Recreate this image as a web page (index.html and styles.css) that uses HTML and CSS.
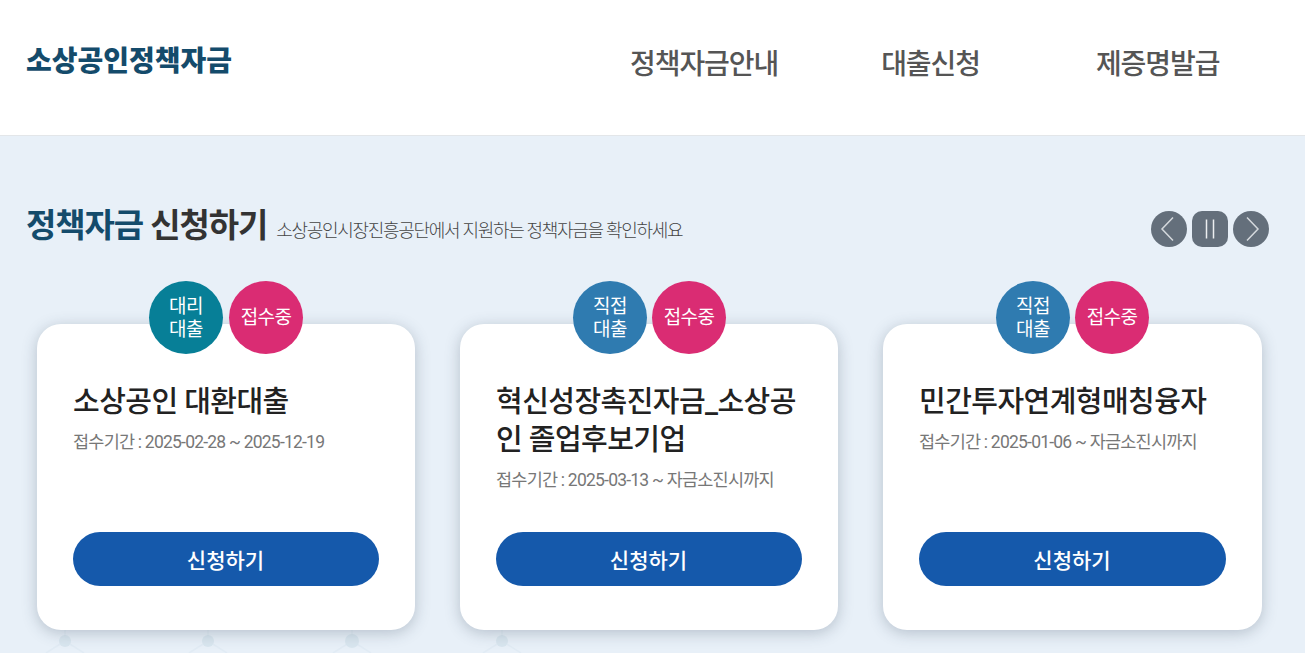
FILE: index.html
```html
<!DOCTYPE html>
<html lang="ko">
<head>
<meta charset="utf-8">
<title>소상공인정책자금</title>
<link rel="stylesheet" href="styles.css">
</head>
<body>
<header class="site-header">
  <a class="logo">소상공인정책자금</a>
  <nav class="gnb">
    <a class="gnb-a">정책자금안내</a>
    <a class="gnb-b">대출신청</a>
    <a class="gnb-c">제증명발급</a>
  </nav>
</header>
<main class="main">
  <svg class="pattern" width="540" height="30" viewBox="0 0 540 30" aria-hidden="true">
    <g fill="none" stroke="#e1ebf4" stroke-width="1.500">
      <path d="M65 0V18M46 30L65 18L84 30M208 0V18M189 30L208 18L227 30M352 0V18M333 30L352 18L371 30M502 0V18M483 30L502 18L521 30"/>
    </g>
    <g fill="#d9e6ef">
      <circle cx="65" cy="18" r="6"/><circle cx="208" cy="18" r="6"/><circle cx="352" cy="18" r="7"/><circle cx="502" cy="18" r="6"/>
    </g>
  </svg>
  <div class="title-row">
    <h2 class="title"><span class="title-accent">정책자금</span> 신청하기</h2>
    <p class="subtitle">소상공인시장진흥공단에서 지원하는 정책자금을 확인하세요</p>
    <div class="controls">
      <button class="ctl ctl-round" aria-label="이전"><svg width="36" height="36" viewBox="0 0 36 36"><path d="M22 6.500L11 18L22 29.500" fill="none" stroke="#d5d9dd" stroke-width="1.500"/></svg></button>
      <button class="ctl ctl-square" aria-label="정지"><svg width="36" height="36" viewBox="0 0 36 36"><path d="M14.500 8.500V27.500M21.500 8.500V27.500" fill="none" stroke="#eceef0" stroke-width="1.500"/></svg></button>
      <button class="ctl ctl-round" aria-label="다음"><svg width="36" height="36" viewBox="0 0 36 36"><path d="M14 6.500L25 18L14 29.500" fill="none" stroke="#d5d9dd" stroke-width="1.500"/></svg></button>
    </div>
  </div>
  <div class="cards">
    <article class="card">
      <div class="badges badges-first">
        <span class="badge teal">대리<br>대출</span>
        <span class="badge pink">접수중</span>
      </div>
      <h3 class="card-title">소상공인 대환대출</h3>
      <p class="period">접수기간 : 2025-02-28 ~ 2025-12-19</p>
      <a class="apply">신청하기</a>
    </article>
    <article class="card">
      <div class="badges">
        <span class="badge blue">직접<br>대출</span>
        <span class="badge pink">접수중</span>
      </div>
      <h3 class="card-title">혁신성장촉진자금_소상공인 졸업후보기업</h3>
      <p class="period">접수기간 : 2025-03-13 ~ 자금소진시까지</p>
      <a class="apply">신청하기</a>
    </article>
    <article class="card">
      <div class="badges">
        <span class="badge blue">직접<br>대출</span>
        <span class="badge pink">접수중</span>
      </div>
      <h3 class="card-title">민간투자연계형매칭융자</h3>
      <p class="period">접수기간 : 2025-01-06 ~ 자금소진시까지</p>
      <a class="apply">신청하기</a>
    </article>
  </div>
</main>
</body>
</html>
```
FILE: styles.css
```css
* { box-sizing: border-box; margin: 0; padding: 0; }
html, body { height: 653px; overflow: hidden; }
body { font-family: Roboto, "Noto Sans CJK KR", "Noto Sans", sans-serif; background: #e8f0f8; color: #222; }

.site-header { height: 136px; background: #fff; border-bottom: 1px solid #e3e6e9; display: flex; align-items: center; padding-left: 26px; }
.logo { font-size: 28px; font-weight: 900; color: #144b6b; letter-spacing: 0; line-height: 1; margin-top: -11px; width: 604px; }
.gnb { display: flex; margin-top: -5px; font-size: 28px; font-weight: 500; color: #555; letter-spacing: -1.070px; line-height: 1.2; }
.gnb-b { margin-left: 103px; }
.gnb-c { margin-left: 116px; }

.main { position: relative; height: 517px; padding-top: 68px; }
.pattern { position: absolute; left: 0; bottom: 0; }
.title-row { position: relative; display: flex; align-items: center; height: 40px; padding-left: 26px; }
.title { font-size: 33px; font-weight: 700; letter-spacing: -1.100px; color: #333; line-height: 40px; margin-top: 4px; }
.title-accent { color: #144b6b; }
.subtitle { font-size: 18px; font-weight: 300; letter-spacing: -1.300px; color: #444; margin-left: 9px; margin-top: 9px; }
.controls { display: flex; gap: 5px; margin-left: auto; margin-right: 36px; margin-top: 9px; }
.ctl { width: 36px; height: 36px; border: 0; background: #646f7b; display: block; }
.ctl svg { display: block; }
.ctl-round { border-radius: 50%; }
.ctl-square { border-radius: 10px; }

.cards { position: relative; display: grid; grid-template-columns: 378px 378px 379px; gap: 45px; margin: 80px 0 0 37px; }
.card { position: relative; height: 306px; background: #fff; border-radius: 24px; padding: 59px 36px 0; box-shadow: 0 3px 15px rgba(50, 70, 90, .28); display: flex; flex-direction: column; }
.badges { position: absolute; top: -43px; left: 113px; display: flex; gap: 5px; }
.badges-first { left: 112px; gap: 6px; }
.badge { width: 74px; height: 73px; border-radius: 50%; color: #fff; display: flex; align-items: center; justify-content: center; text-align: center; font-size: 19px; line-height: 23px; letter-spacing: -.6px; font-weight: 400; }
.teal { background: #077f97; }
.blue { background: #2f7bb0; }
.pink { background: #da2c73; }
.card-title { font-size: 29px; font-weight: 500; line-height: 38px; letter-spacing: -.55px; color: #222; word-break: break-all; }
.period { font-size: 17.500px; font-weight: 400; letter-spacing: -.78px; color: #777; line-height: 26px; margin-top: 8px; }
.apply { position: absolute; left: 36px; right: 36px; top: 208px; height: 54px; padding-right: 1px; border-radius: 27px; background: #1559ab; color: #fff; font-size: 21px; font-weight: 500; display: flex; align-items: center; justify-content: center; letter-spacing: 0; }
```
